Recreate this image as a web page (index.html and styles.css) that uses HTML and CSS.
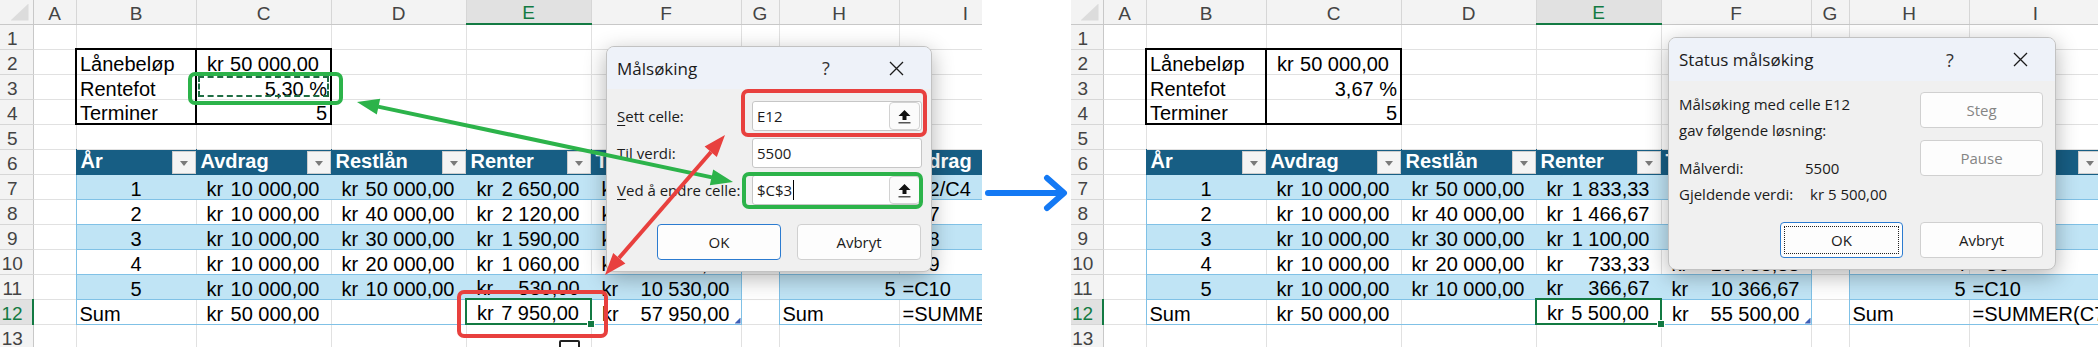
FILE: index.html
```html
<!DOCTYPE html>
<html>
<head>
<meta charset="UTF-8">
<title>Målsøking – før og etter</title>
<link rel="stylesheet" href="styles.css">
</head>
<body>
<div class="canvas">

<div class="shot left">
<table class="sheet">
<colgroup><col class="rh"><col class="a"><col class="b"><col class="c"><col class="d"><col class="e"><col class="f"><col class="g"><col class="h"><col class="i"></colgroup>
<tr class="heads"><td class="corner"><span class="tri"></span></td><td class="ch">A</td><td class="ch">B</td><td class="ch">C</td><td class="ch">D</td><td class="ch sel">E</td><td class="ch">F</td><td class="ch">G</td><td class="ch">H</td><td class="ch">I</td></tr>
<tr><td class="rh">1</td><td></td><td></td><td></td><td></td><td></td><td></td><td></td><td></td><td></td></tr>
<tr><td class="rh">2</td><td></td><td class="box-t box-l box-r">Lånebeløp</td><td class="acc box-t box-r"><span class="kr">kr</span>50 000,00</td><td></td><td></td><td></td><td></td><td></td><td></td></tr>
<tr><td class="rh">3</td><td></td><td class="box-l box-r">Rentefot</td><td class="num box-r ants">5,30 %</td><td></td><td></td><td></td><td></td><td></td><td></td></tr>
<tr><td class="rh">4</td><td></td><td class="box-l box-r box-b">Terminer</td><td class="num box-r box-b">5</td><td></td><td></td><td></td><td></td><td></td><td></td></tr>
<tr><td class="rh">5</td><td></td><td></td><td></td><td></td><td></td><td></td><td></td><td></td><td></td></tr>
<tr><td class="rh">6</td><td></td><td class="th"><span class="dd"></span>År</td><td class="th"><span class="dd"></span>Avdrag</td><td class="th"><span class="dd"></span>Restlån</td><td class="th"><span class="dd"></span>Renter</td><td class="th"><span class="dd"></span>Terminbeløp</td><td></td><td class="th"><span class="dd"></span>År</td><td class="th"><span class="dd"></span>Avdrag</td></tr>
<tr><td class="rh">7</td><td></td><td class="bd ts mid">1</td><td class="bd acc"><span class="kr">kr</span>10 000,00</td><td class="bd acc"><span class="kr">kr</span>50 000,00</td><td class="bd acc"><span class="kr">kr</span>2 650,00</td><td class="bd acc te"><span class="kr">kr</span>12 650,00</td><td></td><td class="bd ts num">1</td><td class="bd">=C2/C4</td></tr>
<tr><td class="rh">8</td><td></td><td class="wt ts mid">2</td><td class="wt acc"><span class="kr">kr</span>10 000,00</td><td class="wt acc"><span class="kr">kr</span>40 000,00</td><td class="wt acc"><span class="kr">kr</span>2 120,00</td><td class="wt acc te"><span class="kr">kr</span>12 120,00</td><td></td><td class="wt ts num">2</td><td class="wt">=C7</td></tr>
<tr><td class="rh">9</td><td></td><td class="bd ts mid">3</td><td class="bd acc"><span class="kr">kr</span>10 000,00</td><td class="bd acc"><span class="kr">kr</span>30 000,00</td><td class="bd acc"><span class="kr">kr</span>1 590,00</td><td class="bd acc te"><span class="kr">kr</span>11 590,00</td><td></td><td class="bd ts num">3</td><td class="bd">=C8</td></tr>
<tr><td class="rh">10</td><td></td><td class="wt ts mid">4</td><td class="wt acc"><span class="kr">kr</span>10 000,00</td><td class="wt acc"><span class="kr">kr</span>20 000,00</td><td class="wt acc"><span class="kr">kr</span>1 060,00</td><td class="wt acc te"><span class="kr">kr</span>11 060,00</td><td></td><td class="wt ts num">4</td><td class="wt">=C9</td></tr>
<tr><td class="rh">11</td><td></td><td class="bd ts mid">5</td><td class="bd acc"><span class="kr">kr</span>10 000,00</td><td class="bd acc"><span class="kr">kr</span>10 000,00</td><td class="bd acc"><span class="kr">kr</span>530,00</td><td class="bd acc te"><span class="kr">kr</span>10 530,00</td><td></td><td class="bd ts num">5</td><td class="bd">=C10</td></tr>
<tr><td class="rh sel">12</td><td></td><td class="wt ts">Sum</td><td class="wt acc"><span class="kr">kr</span>50 000,00</td><td class="wt"></td><td class="wt acc cur"><span class="kr">kr</span>7 950,00<span class="fill"></span></td><td class="wt acc te handle"><span class="kr">kr</span>57 950,00<span class="grip"></span></td><td></td><td class="wt ts">Sum</td><td class="wt">=SUMMER(C7:C11)</td></tr>
<tr><td class="rh">13</td><td></td><td></td><td></td><td></td><td></td><td></td><td></td><td></td><td></td></tr>
</table>

<span class="paste"></span>

<div class="dialog goal">
  <div class="titlebar"><span class="title">Målsøking</span><span class="tbtn">?</span><span class="tbtn"><svg width="15" height="15" viewBox="0 0 15 15"><path d="M1 1L14 14M14 1L1 14" stroke="#1b1b1b" stroke-width="1.3"/></svg></span></div>
  <div class="gbody">
    <label><u>S</u>ett celle:</label>
    <div class="field">E12<span class="ref"><svg width="13" height="15" viewBox="0 0 13 15"><path d="M6.5 1L12.5 7H8.5V11H4.5V7H0.5Z" fill="#111"/><rect x="0.5" y="13" width="12" height="1.5" fill="#555"/></svg></span></div>
    <label>Til verdi:</label>
    <div class="field">5500</div>
    <label><u>V</u>ed å endre celle:</label>
    <div class="field">$C$3<span class="caret"></span><span class="ref"><svg width="13" height="15" viewBox="0 0 13 15"><path d="M6.5 1L12.5 7H8.5V11H4.5V7H0.5Z" fill="#111"/><rect x="0.5" y="13" width="12" height="1.5" fill="#555"/></svg></span></div>
    <div class="actions"><button class="btn ok">OK</button><button class="btn">Avbryt</button></div>
  </div>
</div>

<svg class="marks" width="982" height="347" viewBox="0 0 982 347">
  <g fill="none" stroke-width="4">
    <rect x="190" y="74" width="151" height="29" rx="5" stroke="#2cb34a"/>
    <rect x="744" y="174" width="177" height="33" rx="5" stroke="#2cb34a"/>
    <rect x="743" y="91" width="182" height="44" rx="5" stroke="#e8403e"/>
    <rect x="459" y="292" width="147" height="44" rx="5" stroke="#e8403e"/>
    <path d="M378 106.6L712 177.4" stroke="#2cb34a"/>
    <path d="M619 258L711 152" stroke="#e8403e"/>
  </g>
  <path d="M357 102L376.8 114.4L380.2 98.8Z M733 182L709.8 185.2L713.2 169.6Z" fill="#2cb34a"/>
  <path d="M605 275L625.4 263.5L613.2 253.1Z M725 135L716.8 156.9L704.6 146.5Z" fill="#e8403e"/>
</svg>
</div>

<div class="gap">
<svg width="89" height="347" viewBox="0 0 89 347"><path d="M6 193H81M65 178L82 193L65 208" fill="none" stroke="#1479f4" stroke-width="6" stroke-linecap="round" stroke-linejoin="round"/></svg>
</div>

<div class="shot right">
<table class="sheet">
<colgroup><col class="rh"><col class="a"><col class="b"><col class="c"><col class="d"><col class="e"><col class="f"><col class="g"><col class="h"><col class="i"></colgroup>
<tr class="heads"><td class="corner"><span class="tri"></span></td><td class="ch">A</td><td class="ch">B</td><td class="ch">C</td><td class="ch">D</td><td class="ch sel">E</td><td class="ch">F</td><td class="ch">G</td><td class="ch">H</td><td class="ch">I</td></tr>
<tr><td class="rh">1</td><td></td><td></td><td></td><td></td><td></td><td></td><td></td><td></td><td></td></tr>
<tr><td class="rh">2</td><td></td><td class="box-t box-l box-r">Lånebeløp</td><td class="acc box-t box-r"><span class="kr">kr</span>50 000,00</td><td></td><td></td><td></td><td></td><td></td><td></td></tr>
<tr><td class="rh">3</td><td></td><td class="box-l box-r">Rentefot</td><td class="num box-r">3,67 %</td><td></td><td></td><td></td><td></td><td></td><td></td></tr>
<tr><td class="rh">4</td><td></td><td class="box-l box-r box-b">Terminer</td><td class="num box-r box-b">5</td><td></td><td></td><td></td><td></td><td></td><td></td></tr>
<tr><td class="rh">5</td><td></td><td></td><td></td><td></td><td></td><td></td><td></td><td></td><td></td></tr>
<tr><td class="rh">6</td><td></td><td class="th"><span class="dd"></span>År</td><td class="th"><span class="dd"></span>Avdrag</td><td class="th"><span class="dd"></span>Restlån</td><td class="th"><span class="dd"></span>Renter</td><td class="th"><span class="dd"></span>Terminbeløp</td><td></td><td class="th"><span class="dd"></span>År</td><td class="th"><span class="dd"></span>Avdrag</td></tr>
<tr><td class="rh">7</td><td></td><td class="bd ts mid">1</td><td class="bd acc"><span class="kr">kr</span>10 000,00</td><td class="bd acc"><span class="kr">kr</span>50 000,00</td><td class="bd acc"><span class="kr">kr</span>1 833,33</td><td class="bd acc te"><span class="kr">kr</span>11 833,33</td><td></td><td class="bd ts num">1</td><td class="bd">=C2/C4</td></tr>
<tr><td class="rh">8</td><td></td><td class="wt ts mid">2</td><td class="wt acc"><span class="kr">kr</span>10 000,00</td><td class="wt acc"><span class="kr">kr</span>40 000,00</td><td class="wt acc"><span class="kr">kr</span>1 466,67</td><td class="wt acc te"><span class="kr">kr</span>11 466,67</td><td></td><td class="wt ts num">2</td><td class="wt">=C7</td></tr>
<tr><td class="rh">9</td><td></td><td class="bd ts mid">3</td><td class="bd acc"><span class="kr">kr</span>10 000,00</td><td class="bd acc"><span class="kr">kr</span>30 000,00</td><td class="bd acc"><span class="kr">kr</span>1 100,00</td><td class="bd acc te"><span class="kr">kr</span>11 100,00</td><td></td><td class="bd ts num">3</td><td class="bd">=C8</td></tr>
<tr><td class="rh">10</td><td></td><td class="wt ts mid">4</td><td class="wt acc"><span class="kr">kr</span>10 000,00</td><td class="wt acc"><span class="kr">kr</span>20 000,00</td><td class="wt acc"><span class="kr">kr</span>733,33</td><td class="wt acc te"><span class="kr">kr</span>10 733,33</td><td></td><td class="wt ts num">4</td><td class="wt">=C9</td></tr>
<tr><td class="rh">11</td><td></td><td class="bd ts mid">5</td><td class="bd acc"><span class="kr">kr</span>10 000,00</td><td class="bd acc"><span class="kr">kr</span>10 000,00</td><td class="bd acc"><span class="kr">kr</span>366,67</td><td class="bd acc te"><span class="kr">kr</span>10 366,67</td><td></td><td class="bd ts num">5</td><td class="bd">=C10</td></tr>
<tr><td class="rh sel">12</td><td></td><td class="wt ts">Sum</td><td class="wt acc"><span class="kr">kr</span>50 000,00</td><td class="wt"></td><td class="wt acc cur"><span class="kr">kr</span>5 500,00<span class="fill"></span></td><td class="wt acc te handle"><span class="kr">kr</span>55 500,00<span class="grip"></span></td><td></td><td class="wt ts">Sum</td><td class="wt">=SUMMER(C7:C11)</td></tr>
<tr><td class="rh">13</td><td></td><td></td><td></td><td></td><td></td><td></td><td></td><td></td><td></td></tr>
</table>

<div class="dialog status">
  <div class="titlebar"><span class="title">Status målsøking</span><span class="tbtn">?</span><span class="tbtn"><svg width="15" height="15" viewBox="0 0 15 15"><path d="M1 1L14 14M14 1L1 14" stroke="#1b1b1b" stroke-width="1.3"/></svg></span></div>
  <div class="sbody">
    <div class="info">
      <p>Målsøking med celle E12<br>gav følgende løsning:</p>
      <p class="pair"><span class="k1">Målverdi:</span>5500</p>
      <p class="pair"><span class="k2">Gjeldende verdi:</span>kr 5 500,00</p>
    </div>
    <div class="side"><button class="btn off">Steg</button><button class="btn off">Pause</button></div>
    <button class="btn ok focus">OK</button>
    <button class="btn">Avbryt</button>
  </div>
</div>
</div>

</div>
</body>
</html>
```

FILE: styles.css
```css
body{margin:0;background:#fff;font-family:"Liberation Sans",Arial,sans-serif;}
.canvas{display:flex;width:2098px;height:347px;overflow:hidden;}
.shot{position:relative;flex:none;height:347px;overflow:hidden;}
.shot.left{width:982px;}
.shot.right{width:1027px;}
.gap{flex:none;width:89px;}
.gap svg{display:block;}
.marks{position:absolute;left:0;top:0;pointer-events:none;}

/* sheet grid */
.sheet{border-collapse:collapse;table-layout:fixed;width:1032px;font-size:20px;color:#000;}
.right .sheet{width:1031px;}
.sheet col{border-right:1px solid #e1e1e1;}
.sheet col.rh{width:33px;}.right .sheet col.rh{width:32px;}
.sheet col.a{width:43px;}.sheet col.b{width:120px;}.sheet col.c{width:135px;}.sheet col.d{width:135px;}
.sheet col.e{width:125px;}.sheet col.f{width:150px;}.sheet col.g{width:38px;}.sheet col.h{width:120px;}.sheet col.i{width:133px;}
.sheet tr{height:25px;border-bottom:1px solid #e1e1e1;}
.sheet tr.heads{height:24px;}
.sheet td{padding:0 3px;line-height:20px;vertical-align:bottom;white-space:nowrap;}

/* headers */
.ch,.rh,.corner{background:#f3f3f3;color:#444;font-size:19px;}
.ch{text-align:center;vertical-align:middle;border-right:1px solid #d6d6d6;border-bottom:1px solid #c8c8c8;}
.sheet .rh{text-align:center;padding:0 8px 0 0;border-right:1px solid #c8c8c8;border-bottom:1px solid #d6d6d6;}
.sheet .corner{padding:0;border-right:1px solid #c8c8c8;border-bottom:1px solid #c8c8c8;}
.tri{display:block;width:18px;height:17px;margin:0 4px 3px auto;background:#dcdcdc;clip-path:polygon(100% 0,100% 100%,0 100%);}
.ch.sel{background:#e1e1e1;color:#137a43;border-bottom:2px solid #137a43;}
.rh.sel{background:#e1e1e1;color:#137a43;border-right:2px solid #137a43;}

/* cell formats */
.num{text-align:right;}
.mid{text-align:center;}
.sheet .acc{text-align:right;padding:0 11px 0 10px;}
.kr{float:left;}
.box-t{border-top:2px solid #000;}
.box-b{border-bottom:2px solid #000;}
.box-l{border-left:2px solid #000;}
.box-r{border-right:2px solid #000;}
.ants{outline:2px dashed #1f6e43;outline-offset:-4px;}

/* formatted table */
.sheet .th{background:#175e84;color:#fff;font-weight:bold;padding:0 0 0 4px;border-left:1px solid #175e84;border-right:1px solid #175e84;border-bottom:1px solid #175e84;}
.dd{float:right;width:24px;height:23px;background:#f4f4f4;border:1px solid #cdcdcd;box-sizing:border-box;}
.dd::after{content:"";display:block;width:0;height:0;margin:9px auto 0;border-left:4px solid transparent;border-right:4px solid transparent;border-top:5px solid #7a7a7a;}
.bd{background:#c0e4f5;border-left:1px solid #c0e4f5;border-right:1px solid #c0e4f5;border-bottom:1px solid #80c1e6;}
.wt{border-bottom:1px solid #80c1e6;}
.ts{border-left:1px solid #80c1e6;}
.te{border-right:1px solid #80c1e6;}
.sheet .cur{border:2px solid #137a43;position:relative;}
.fill{position:absolute;right:-5px;bottom:-5px;width:8px;height:8px;background:#137a43;border:1px solid #fff;box-sizing:border-box;}
.handle{position:relative;}
.grip{position:absolute;right:0;bottom:0;width:6px;height:6px;background:#3c5fb8;clip-path:polygon(100% 0,100% 100%,0 100%);}
.paste{position:absolute;left:559px;top:340px;width:21px;height:14px;border:2px solid #222;border-radius:2px;background:#fff;box-sizing:border-box;}

/* dialogs */
.dialog{position:absolute;box-sizing:border-box;background:#f0f0f0;border:1px solid #c2c2c2;border-radius:8px;box-shadow:0 6px 22px rgba(0,0,0,.3);font-family:"Open Sans",sans-serif;font-size:15px;color:#1b1b1b;overflow:hidden;}
.goal{left:606px;top:46px;width:326px;height:226px;}
.status{left:597px;top:37px;width:388px;height:233px;}
.titlebar{display:flex;align-items:center;height:42px;padding-left:10px;background:#eef2f9;}
.status .titlebar{height:43px;}
.title{flex:1;font-size:17px;}
.tbtn{width:70px;display:flex;justify-content:center;font-size:18px;color:#333;}
.btn{font:inherit;color:#1b1b1b;height:36px;background:#fdfdfd;border:1px solid #d0d0d0;border-radius:4px;padding:0;}
.btn.ok{border-color:#2b7bd0;}
.btn.focus{outline:1px dotted #222;outline-offset:-5px;}
.btn.off{color:#858585;}

.gbody{display:grid;grid-template-columns:135px 170px;row-gap:7px;align-items:center;padding:12px 9px 0 10px;}
.gbody u{text-decoration-thickness:1px;text-underline-offset:3px;}
.field{display:flex;align-items:center;height:30px;box-sizing:border-box;background:#fff;border:1px solid #c6c6c6;border-radius:3px;padding-left:4px;}
.ref{margin-left:auto;margin-right:1px;width:31px;height:28px;box-sizing:border-box;display:flex;align-items:center;justify-content:center;background:#fbfbfb;border:1px solid #d2d2d2;border-radius:4px;}
.caret{display:inline-block;width:1px;height:20px;background:#000;margin-left:1px;}
.actions{grid-column:1/-1;display:flex;justify-content:flex-end;gap:16px;margin:12px 1px 0 0;}
.actions .btn{width:124px;}

.sbody{display:grid;grid-template-columns:224px 123px;column-gap:17px;row-gap:15px;padding:10px 12px 0 10px;}
.info p{margin:0;line-height:26px;}
.info .pair{display:flex;}
.info p.pair:nth-child(2){margin-top:12px;}
.k1{width:126px;}
.k2{width:131px;}
.side{display:flex;flex-direction:column;gap:12px;margin-top:1px;}
.sbody .ok{width:123px;justify-self:end;}
.sbody .btn{width:123px;}
```
